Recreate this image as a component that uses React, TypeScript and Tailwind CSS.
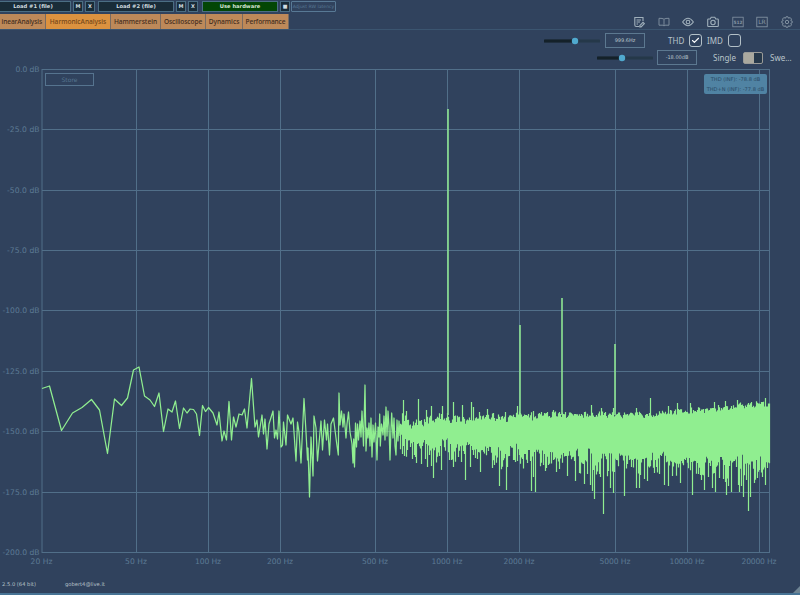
import React, { useState } from 'react';
import { Check } from 'lucide-react';

const TABS = [
  { name: 'inearAnalysis', width: 'w-[46px] justify-end pr-[3px] tracking-[-0.12px]' },
  { name: 'HarmonicAnalysis', width: 'w-[65px] justify-center' },
  { name: 'Hammerstein', width: 'w-[50px] justify-center' },
  { name: 'Oscilloscope', width: 'w-[45px] justify-center tracking-[-0.1px]' },
  { name: 'Dynamics', width: 'w-[37px] justify-center' },
  { name: 'Performance', width: 'w-[46px] justify-center tracking-[-0.1px]' },
];

const FREQS = [
  { x: 42, label: '20 Hz', w: 22 },
  { x: 136.5, label: '50 Hz', w: 22 },
  { x: 208.5, label: '100 Hz', w: 26 },
  { x: 280.5, label: '200 Hz', w: 26 },
  { x: 375.5, label: '500 Hz', w: 26 },
  { x: 447.5, label: '1000 Hz', w: 31 },
  { x: 519.5, label: '2000 Hz', w: 31 },
  { x: 615.5, label: '5000 Hz', w: 31 },
  { x: 687.5, label: '10000 Hz', w: 35 },
  { x: 759.5, label: '20000 Hz', w: 35 },
];

const LEVELS = [
  { y: 69.5, label: '0.0 dB', w: 24 },
  { y: 129.5, label: '-25.0 dB', w: 32.5 },
  { y: 190.5, label: '-50.0 dB', w: 32.5 },
  { y: 250.5, label: '-75.0 dB', w: 32.5 },
  { y: 310.5, label: '-100.0 dB', w: 37 },
  { y: 371.5, label: '-125.0 dB', w: 37 },
  { y: 431.5, label: '-150.0 dB', w: 37 },
  { y: 492.5, label: '-175.0 dB', w: 37 },
  { y: 552.5, label: '-200.0 dB', w: 37 },
];

// Low end of the spectrum, where single bins are still visible
const LOW_TRACE =
  '42,388.5 49.5,386 61.5,430.5 72.5,413 82,407.5 91.5,399.5 99.5,410 107.5,453.5 114.5,399 121.5,405.5 127.5,398 133.5,370 139,367 144.5,396 150,400 154.5,406.5 159,393 163.5,431.5 168,409 172,412 175.5,401 179.5,428.5 183.5,408 187,413 190,409 193.5,409.5 196.5,414 199.5,435.5 ' +
  '202.5,405.5 205.5,411.5 208.5,407.5 213,413 217,425 219,412 222,441 224,431 226.5,440 229,401.5 231.5,440 233.5,417 236,427 239,414 242,415 244.5,409 247,428 251.5,378.5 255,427 257,420 258.5,437 262,415 263.5,434 265,419 267,449 269,424 273,411 274.5,438 276,430 277.5,439 279,411 281,447 282.5,445 283.5,422 286,445 287.5,415 291,424 293,418 296,461 297.5,422 299,432 301,463 304,398.5 306,432 307.5,460 308,448 309.5,497 311,437 313,476 314,416 316,428 317.5,461 321,421 322.5,450 324.5,420 326.5,440 327.5,424 329.5,455 331,424 333.5,418 336.5,442 338.3,455 339,393 340,425 341.5,411 343,427 344,414 346,438 347,424 348.5,412 350,432 352,444 353,463 353.7,439 354.5,467 355.5,423 356.5,447 357.5,424 358.5,440 360,421 361,437 362,411 363.5,446 365,385 366,451 367,428 368,438 369,423 370,446 371,418 372,457 373,425 374,442 375.5,423 377,460 378,427 379,437 379.7,414 380.3,446 381.5,424 383,435 384,416 385,440 386,407 387,436 388,411 389,427 390,460 391,428 391.7,413 393,438 394,418 395,446 396,455 397,420 398,441 399,421 400,436';

// Bins that dip below the noise floor: x -> y
const DIPS: Record<number, number> = {
  404: 456, 407: 450, 412: 459, 416: 463, 421: 464, 425: 459, 427: 467, 431: 466, 433: 478, 439: 456, 441: 470,
  449: 460, 451: 460, 453: 467, 465: 480, 470: 467, 475: 458, 480: 472, 492: 468, 494: 465, 499: 486, 506: 490,
  514: 460, 522: 459, 527: 463, 531: 491, 533: 477, 535: 492, 543: 465, 545: 471, 546: 468, 556: 472, 559: 469,
  567: 476, 575: 481, 579: 473, 584: 484, 590: 485, 592: 491, 594: 499, 599: 474,
  600: 477, 603: 514, 610: 488, 613: 493, 624: 496, 636: 488, 639: 488, 644: 479, 647: 481, 659: 474, 664: 485,
  668: 486, 672: 476, 680: 483, 692: 495, 701: 480, 704: 490, 708: 477, 712: 488, 715: 492, 719: 478, 726: 495,
  728: 486, 731: 492, 738: 485, 739: 492, 741: 486, 743: 497, 746: 480, 748: 511, 750: 497, 754: 483, 757: 478,
  762: 477, 765: 485,
};

// Harmonics and other bins that rise above it
const PEAKS: Record<number, number> = {
  403: 400, 406: 411, 418: 399, 426: 410, 431: 406, 442: 406, 453: 402, 462: 405, 471: 402, 473: 407,
  479: 412, 487: 409, 505: 412, 517: 406, 528: 414, 533: 411, 547: 412, 553: 410, 559: 412, 591: 405,
  601: 408, 613: 408, 636: 408, 650: 398, 668: 406, 677: 403, 690: 403, 714: 402, 725: 401, 737: 400, 765: 398,
};

const noise = (n: number) => {
  const v = Math.sin(n * 127.1) * 43758.5453;
  return v - Math.floor(v);
};

const buildFloor = () => {
  let d = '';
  for (let x = 400; x < 770; x++) {
    const density = Math.min(1, (x - 400) / 160);
    const rise = x > 650 ? (x - 650) * 0.1 : 0;
    // neighbouring columns share part of their height
    const pair = noise(Math.floor(x / 2) + 300);
    const top = PEAKS[x] ?? 411 - rise + (noise(x) * 0.5 + pair * 0.5) * (20 - density * 12);
    const base = 432 + density * 16 + Math.max(0, x - 600) * 0.045;
    const bottom = DIPS[x] ?? base + noise(x + 900) ** 2 * 18 + noise(Math.floor(x / 3) + 50) * 12;
    d += `M${x + 0.5} ${top.toFixed(1)}V${bottom.toFixed(1)}`;
  }
  return d;
};

const FLOOR = buildFloor();

const SourceButton = ({ children }: { children: React.ReactNode }) => (
  <button className="h-[11px] w-[76px] shrink-0 border border-[#4b6e84] bg-[#192c38] text-[5.2px] font-bold leading-[9px] text-[#d2dce0]">
    {children}
  </button>
);

const MiniButton = ({ children }: { children: React.ReactNode }) => (
  <button className="h-[11px] w-[10px] shrink-0 border border-[#4b6e84] bg-[#192c38] text-[5px] font-bold leading-[9px] text-[#d2dce0]">
    {children}
  </button>
);

const Slider = ({ knob }: { knob: string }) => (
  <svg width="56" height="8" viewBox="0 0 56 8">
    <path d="M1 4H55" stroke="#253849" strokeWidth="3" strokeLinecap="round" />
    <path d={`M1 4H${knob}`} stroke="#142129" strokeWidth="3" strokeLinecap="round" />
    <circle cx={knob} cy="4" r="3.2" fill="#50a9ce" />
  </svg>
);

const ToolIcons = () => (
  <div className="flex h-3 items-center gap-[12.7px] pr-[7px] text-[#a0b0bb]">
    <svg width="12" height="12" viewBox="0 0 12 12" fill="none" stroke="currentColor" strokeWidth="1.1">
      <path d="M6 10.5H3.3Q1.8 10.5 1.8 9V1.5H10V5M3.5 4H8M3.5 6H7M3.5 8H5" />
      <path d="M6.8 9.6L10 6.4L11.3 7.7L8.1 10.9H6.8Z" />
    </svg>
    <svg width="12" height="12" viewBox="0 0 12 12" fill="none" stroke="currentColor" strokeWidth="0.9" opacity="0.75">
      <path d="M6 3.2Q4.5 2.1 1 2.3V9.2H5L6 10L7 9.2H11V2.3Q7.5 2.1 6 3.2" />
      <path d="M6 3.5V9" />
    </svg>
    <svg width="12" height="12" viewBox="0 0 12 12" fill="none" stroke="currentColor" strokeWidth="1.1">
      <path d="M.6 6Q6 -1.4 11.4 6Q6 13.4 .6 6Z" />
      <circle cx="6" cy="6" r="1.8" />
    </svg>
    <svg width="12" height="12" viewBox="0 0 12 12" fill="none" stroke="currentColor" strokeWidth="1.1">
      <path d="M1.5 3H3.2L4.2 1.3H7.8L8.8 3H10.5Q11.3 3 11.3 3.8V9.7Q11.3 10.5 10.5 10.5H1.5Q.7 10.5 .7 9.7V3.8Q.7 3 1.5 3Z" />
      <circle cx="6" cy="6.5" r="2.2" />
    </svg>
    <svg width="12" height="12" viewBox="0 0 12 12" opacity="0.75">
      <rect x="0.8" y="1.2" width="10.4" height="9.6" fill="none" stroke="currentColor" strokeWidth="0.8" />
      <text x="6" y="7.9" textAnchor="middle" fontSize="4.4" fontWeight="bold" fill="currentColor">512</text>
    </svg>
    <svg width="12" height="12" viewBox="0 0 12 12" opacity="0.8">
      <rect x="0.8" y="1.2" width="10.4" height="9.6" fill="none" stroke="currentColor" strokeWidth="0.8" />
      <text x="6" y="8.3" textAnchor="middle" fontSize="6" fill="currentColor">LR</text>
    </svg>
    <svg width="12" height="12" viewBox="0 0 12 12" fill="none" stroke="currentColor" strokeWidth="0.9" opacity="0.8">
      <path d="M5 .8H7L7.5 2.2L9.2 1.6L10.5 3.1L9.8 4.7L11.2 5.2V6.8L9.8 7.3L10.5 8.9L9.2 10.4L7.5 9.8L7 11.2H5L4.5 9.8L2.8 10.4L1.5 8.9L2.2 7.3L.8 6.8V5.2L2.2 4.7L1.5 3.1L2.8 1.6L4.5 2.2Z" />
      <circle cx="6" cy="6" r="1.7" />
    </svg>
  </div>
);

const Spectrum = () => (
  <svg width="800" height="510" viewBox="0 66 800 510" className="block">
    <g stroke="#516f89" strokeWidth="1">
      {FREQS.map(f => <path key={f.label} d={`M${f.x} 69V553`} />)}
      {LEVELS.map(l => <path key={l.label} d={`M42 ${l.y}H769`} />)}
      <path d="M769.5 69V553" />
    </g>
    <g fill="#5d7b95" fontSize="7.6">
      {LEVELS.map(l => (
        <text key={l.label} x="39.5" y={l.y + 2} textAnchor="end" textLength={l.w}>{l.label}</text>
      ))}
      {FREQS.map(f => (
        <text key={f.label} x={f.x - 0.5} y="563.5" textAnchor="middle" textLength={f.w}>{f.label}</text>
      ))}
    </g>
    <polyline points={LOW_TRACE} fill="none" stroke="#90ee90" strokeWidth="1.25" strokeLinejoin="round" />
    <path d={FLOOR} stroke="#90ee90" strokeWidth="1.2" />
    <path d="M448 109V415M520 325V415M562 298V415M615 344V415" stroke="#8ee593" strokeWidth="1.6" />
  </svg>
);

export default function App() {
  const [tab, setTab] = useState('HarmonicAnalysis');
  const [thd, setThd] = useState(true);
  const [imd, setImd] = useState(false);

  return (
    <div className="flex h-[595px] w-[800px] flex-col overflow-hidden bg-[#30425d] font-['DejaVu_Sans','Noto_Sans',sans-serif]">
      <div className="flex h-[14px] items-start pt-px">
        <div className="-ml-[5px] flex gap-[2px]">
          <SourceButton>Load #1 (file)</SourceButton>
          <MiniButton>M</MiniButton>
          <MiniButton>X</MiniButton>
        </div>
        <div className="ml-[3px] flex gap-[2px]">
          <SourceButton>Load #2 (file)</SourceButton>
          <MiniButton>M</MiniButton>
          <MiniButton>X</MiniButton>
        </div>
        <button className="ml-[4px] h-[11px] w-[76px] border border-[#4b6e84] bg-[#034605] text-[5.2px] font-bold leading-[9px] text-[#d8e5d7]">Use hardware</button>
        <div className="ml-[2px] flex"><MiniButton>■</MiniButton></div>
        <button className="ml-px h-[11px] w-[45px] whitespace-nowrap rounded-[1px] border border-[#587995] text-[4.6px] leading-[9px] text-[#587995]">Adjust RW latency</button>
      </div>

      <div className="flex h-4 justify-between border-b border-[#3b5570]">
        <div className="flex">
          {TABS.map(t => (
            <button
              key={t.name}
              onClick={() => setTab(t.name)}
              className={`flex h-[15px] items-center border-r border-[#796b60] font-['Noto_Sans'] text-[6.6px] font-medium ${t.width} ${tab === t.name ? 'bg-[#dc923f] text-[#754719]' : 'bg-[#bd8959] text-[#432d20]'}`}
            >
              {t.name}
            </button>
          ))}
        </div>
        <div className="flex items-center"><ToolIcons /></div>
      </div>

      <div className="flex h-[36px] flex-col items-end pt-[2px] text-[8px] text-[#b9c5cb]">
        <div className="flex h-[17px] w-[256px] items-center">
          <Slider knob="31" />
          <div className="ml-[5px] h-[15px] w-[40px] border border-[#5c7890] text-center text-[5px] leading-[13px]">999.6Hz</div>
          <span className="ml-[23px] w-[21px] font-['Noto_Sans']">THD</span>
          <button onClick={() => setThd(!thd)} className="flex size-[13px] items-center justify-center rounded-[3px] border-[1.5px] border-[#b3c0c7] text-white">
            {thd && <Check size={9} strokeWidth={3} />}
          </button>
          <span className="ml-[5px] w-[21px] font-['Noto_Sans']">IMD</span>
          <button onClick={() => setImd(!imd)} className="flex size-[13px] items-center justify-center rounded-[3px] border-[1.5px] border-[#b3c0c7]">
            {imd && <Check size={9} strokeWidth={3} />}
          </button>
        </div>
        <div className="flex h-[17px] w-[203px] items-center">
          <Slider knob="25" />
          <div className="ml-[4px] h-[15px] w-[40px] shrink-0 border border-[#5c7890] text-center text-[5px] leading-[13px]">-18.00dB</div>
          <span className="ml-[16px] w-[30px] shrink-0 font-['Noto_Sans']">Single</span>
          <div className="h-[12px] w-[20px] shrink-0 rounded-[2px] border border-[#9a9b98] bg-[#26384a]"><div className="h-full w-[10px] bg-[#aaa99f]" /></div>
          <span className="ml-[7px] font-['Noto_Sans']">Swe...</span>
        </div>
      </div>

      <div className="relative h-[510px] shrink-0">
        <Spectrum />
        <button className="absolute left-[45px] top-[7px] h-[13px] w-[49px] border border-[#56748f] text-[6px] leading-[11px] text-[#56748f]">Store</button>
        <div className="absolute left-[704px] top-[8px] flex h-[20px] w-[63px] flex-col justify-around rounded-[2px] bg-[#5083a3] text-center text-[5.1px] leading-[8px] whitespace-nowrap text-[#294965]">
          <div>THD (INF): -78.8 dB</div>
          <div>THD+N (INF): -77.8 dB</div>
        </div>
      </div>

      <div className="flex h-[17px] shrink-0 items-center text-[5.2px] text-[#b5c0c8]">
        <span className="w-[63px] pl-[2px]">2.5.0 (64 bit)</span>
        <span className="pl-[2px]">gobert4@live.it</span>
        <svg width="7" height="7" viewBox="0 0 7 7" className="ml-auto self-end"><path d="M0 7L7 0V7Z" fill="#6e8493" /></svg>
      </div>
      <div className="h-[2px] shrink-0 bg-[#477394]" />
    </div>
  );
}
